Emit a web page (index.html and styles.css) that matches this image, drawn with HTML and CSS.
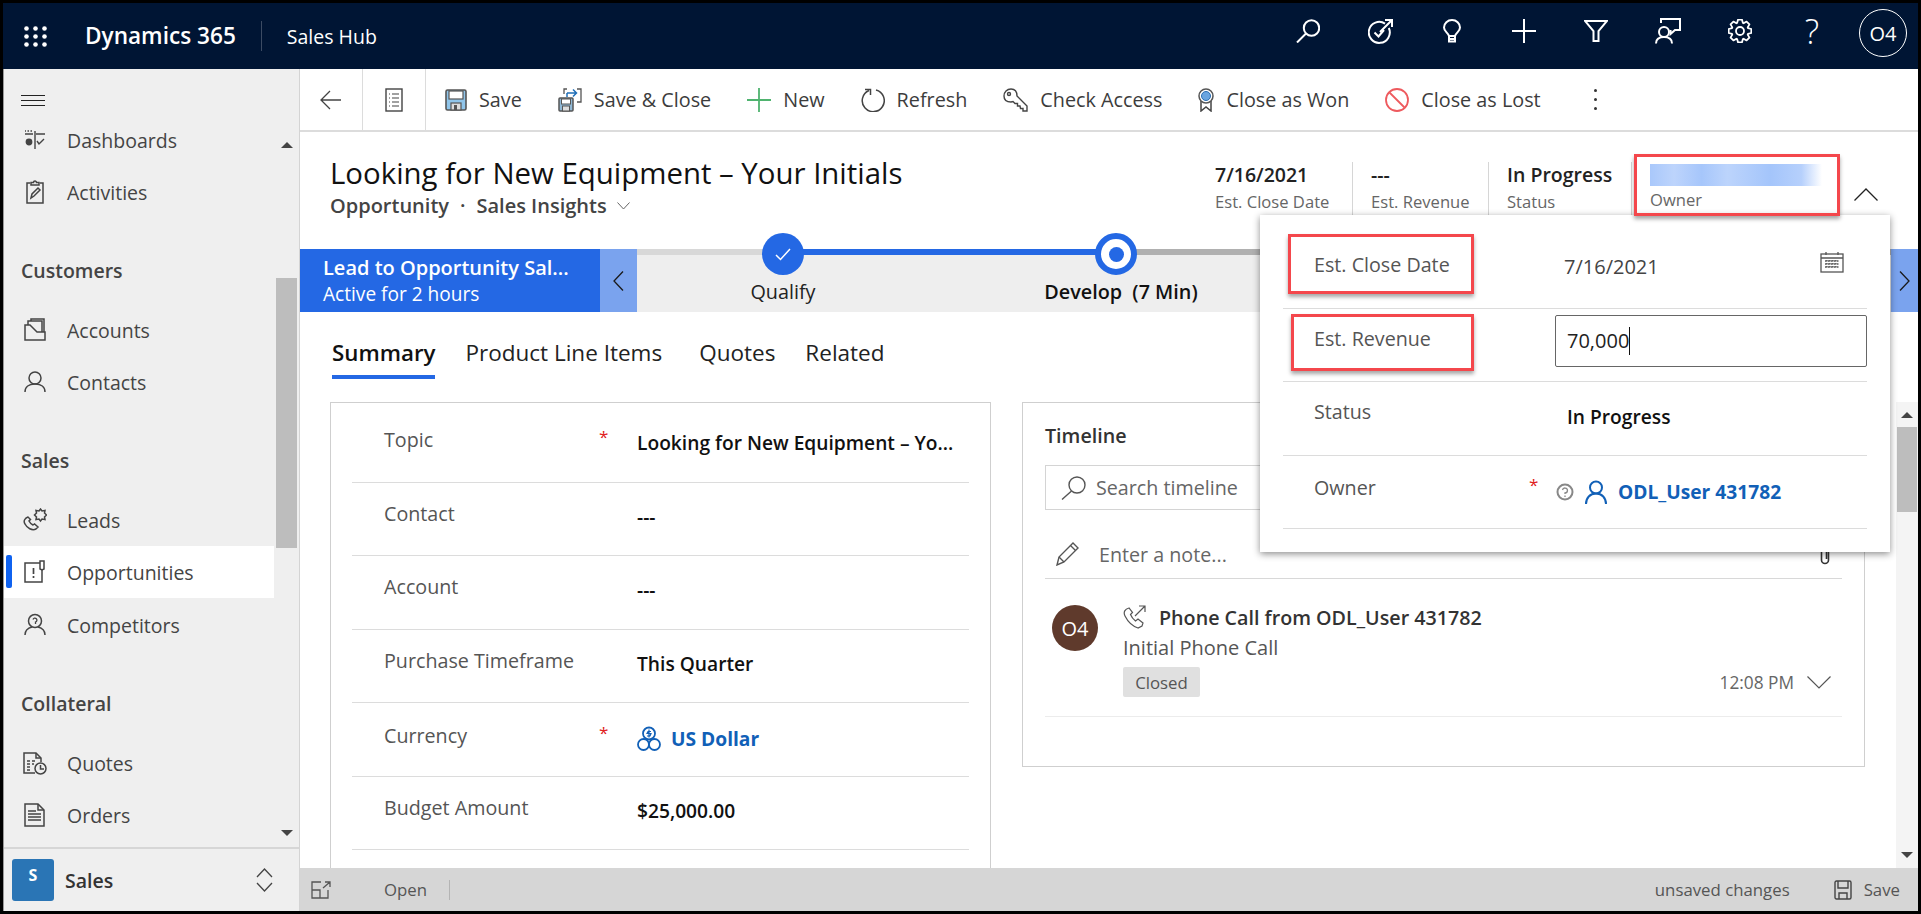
FILE: index.html
```html
<!DOCTYPE html>
<html>
  <head>
    <meta name="viewport" content="width=device-width, initial-scale=1.0" />
    <title>Dynamics 365 - Sales Hub</title>
    <link rel="stylesheet" href="styles.css">
  </head>
  <body>
    <div class="frame">
      <header class="topbar">
        <svg class="waffle" width="23" height="21" viewBox="0 0 23 21" fill="#fff">
          <circle cx="2.5" cy="2.5" r="2.3"/><circle cx="11.5" cy="2.5" r="2.3"/><circle cx="20.5" cy="2.5" r="2.3"/>
          <circle cx="2.5" cy="10.5" r="2.3"/><circle cx="11.5" cy="10.5" r="2.3"/><circle cx="20.5" cy="10.5" r="2.3"/>
          <circle cx="2.5" cy="18.5" r="2.3"/><circle cx="11.5" cy="18.5" r="2.3"/><circle cx="20.5" cy="18.5" r="2.3"/>
        </svg>
        <div class="brand">Dynamics 365</div>
        <div class="app-name">Sales Hub</div>
        <div class="top-icons">
          <div class="top-icon">
            <svg width="24" height="24" viewBox="0 0 24 24" fill="none" stroke="#fff" stroke-width="2"><circle cx="15.5" cy="9" r="7.7"/><path d="M10 14.5L1 23.5"/></svg>
          </div>
          <div class="top-icon">
            <svg width="25" height="25" viewBox="0 0 25 25" fill="none" stroke="#fff" stroke-width="2"><path d="M17 4.6A10.5 10.5 0 1 0 20.8 9"/><path d="M12 13L24 1M17 1H24V8"/><path d="M6.5 13.5L10.5 17.5L16 11"/></svg>
          </div>
          <div class="top-icon">
            <svg width="18" height="24" viewBox="0 0 18 24" fill="none" stroke="#fff" stroke-width="2"><path d="M6 17C5 13.5 1 12.5 1 8.5A8 7.5 0 0 1 17 8.500C17 12.500 13 13.500 12 17Z"/><path d="M6 17V22.500H12V17M6 20H12"/></svg>
          </div>
          <div class="top-icon">
            <svg width="24" height="24" viewBox="0 0 24 24" stroke="#fff" stroke-width="2"><path d="M0 12H24M12 0V24"/></svg>
          </div>
          <div class="top-icon">
            <svg width="24" height="22" viewBox="0 0 24 22" fill="none" stroke="#fff" stroke-width="2"><path d="M1 1H23L14.500 11V21H9.500V11Z"/></svg>
          </div>
          <div class="top-icon">
            <svg width="26" height="26" viewBox="0 0 26 26" fill="none" stroke="#fff" stroke-width="2"><path d="M6 5V1H25V12H20L15.500 16V12"/><circle cx="9" cy="14" r="5"/><path d="M1 25.500C1 21 4 19 9 19C14 19 17 21 17 25.500"/></svg>
          </div>
          <div class="top-icon">
            <svg width="24" height="24" viewBox="-12 -12 24 24" fill="none" stroke="#fff" stroke-width="1.800" stroke-linejoin="round">
              <polygon points="7.99,-2.91 11.33,-2 11.33,2 7.99,2.91 7.71,3.59 9.43,6.6 6.6,9.43 3.59,7.71 2.91,7.99 2,11.33 -2,11.33 -2.91,7.99 -3.59,7.71 -6.6,9.43 -9.43,6.6 -7.71,3.59 -7.99,2.91 -11.33,2 -11.33,-2 -7.99,-2.91 -7.71,-3.59 -9.43,-6.6 -6.6,-9.43 -3.59,-7.71 -2.91,-7.99 -2,-11.33 2,-11.33 2.91,-7.99 3.59,-7.71 6.6,-9.43 9.43,-6.6 7.71,-3.59"/>
              <circle r="4"/>
            </svg>
          </div>
          <div class="top-icon help-glyph">?</div>
          <div class="user-circle">O4</div>
        </div>
      </header>

      <div class="main">
        <aside class="sidebar">
          <div class="burger"><span></span><span></span><span></span></div>
          <div class="nav-wrap">
            <nav class="nav">
              <div class="nav-item">
                <svg width="22" height="22" viewBox="0 0 22 22" fill="none" stroke="#444" stroke-width="1.400"><path d="M1 5H9M12 5H21M11 2V20M1 2H2M3.500 2H5M6.500 2H8"/><circle cx="5" cy="13" r="2.700" fill="#444"/><path d="M13 12L15 15L17 13L20 10"/></svg>
                <span>Dashboards</span>
              </div>
              <div class="nav-item">
                <svg width="22" height="24" viewBox="0 0 22 24" fill="none" stroke="#444" stroke-width="1.500"><path d="M6 3H3V23H19V3H16"/><path d="M7 5V2.500H9.500A1.500 1.500 0 0 1 12.500 2.500H15V5Z"/><path d="M7 18L8 14L14 8L16 10L10 16Z"/></svg>
                <span>Activities</span>
              </div>
              <div class="nav-heading">Customers</div>
              <div class="nav-item">
                <svg width="22" height="24" viewBox="0 0 22 24" fill="none" stroke="#444" stroke-width="1.500"><path d="M1 22V7H6L13 14H21V22Z"/><path d="M4 7V3H18V14M7 3V1H20V14"/></svg>
                <span>Accounts</span>
              </div>
              <div class="nav-item">
                <svg width="22" height="24" viewBox="0 0 22 24" fill="none" stroke="#444" stroke-width="1.500"><circle cx="11" cy="8" r="6"/><path d="M1 22C1 17 5 14 11 14C17 14 21 17 21 22"/></svg>
                <span>Contacts</span>
              </div>
              <div class="nav-heading">Sales</div>
              <div class="nav-item">
                <svg width="24" height="24" viewBox="0 0 24 24" fill="none" stroke="#444" stroke-width="1.500"><path d="M5 9C2 10 0 13 2 16C4 20 9 23 13 21L15 19L11.500 16L10 17C8 16 7 15 6 13L7.500 11.500L5 9Z"/><path d="M16 3L17.500 1L19 3L22 2.500L21.500 5L23.500 7L21.500 9L22 11.500L19 11L17.500 13L16 11L13 11.500L13.500 9L11.500 7L13.500 5L13 2.500Z"/></svg>
                <span>Leads</span>
              </div>
              <div class="nav-item nav-item-active">
                <svg width="22" height="24" viewBox="0 0 22 24" fill="none" stroke="#444" stroke-width="1.500"><path d="M16 3H1V22H18V10"/><path d="M16 1H20V9L18 10L16 9Z"/><path d="M9.500 8V14M9.500 16V18" stroke-width="1.700"/></svg>
                <span>Opportunities</span>
              </div>
              <div class="nav-item">
                <svg width="22" height="24" viewBox="0 0 22 24" fill="none" stroke="#444" stroke-width="1.500"><circle cx="11" cy="8" r="6.500"/><path d="M1 22C1 17 4 15 8 14M21 22C21 17 18 15 14 14"/><path d="M9 6.500A2 2 0 1 1 11.500 9V11" stroke-width="1.300"/></svg>
                <span>Competitors</span>
              </div>
              <div class="nav-heading">Collateral</div>
              <div class="nav-item">
                <svg width="24" height="24" viewBox="0 0 24 24" fill="none" stroke="#444" stroke-width="1.500"><path d="M12 22H1V2H13L18 7V11"/><path d="M13 2V7H18"/><path d="M4 10H7M9 10H12M4 13H7M4 16H7M4 19H7M9 13H11"/><circle cx="17.500" cy="17.500" r="5.500"/><path d="M17.500 14V18H21"/></svg>
                <span>Quotes</span>
              </div>
              <div class="nav-item">
                <svg width="22" height="24" viewBox="0 0 22 24" fill="none" stroke="#444" stroke-width="1.500"><path d="M1 1H14L20 7V23H1Z"/><path d="M14 1V7H20"/><path d="M4 8H12M4 11H17M4 14H17M4 17H17"/></svg>
                <span>Orders</span>
              </div>
            </nav>
            <div class="nav-scroll">
              <div class="arrow-up"></div>
              <div class="nav-thumb"></div>
              <div class="arrow-down"></div>
            </div>
          </div>
          <div class="area-switch">
            <div class="area-badge">S</div>
            <div class="area-name">Sales</div>
            <svg width="17" height="24" viewBox="0 0 17 24" fill="none" stroke="#444" stroke-width="1.300"><path d="M1 9L8.500 1L16 9M1 15L8.500 23L16 15"/></svg>
          </div>
        </aside>

        <section class="content">
          <div class="toolbar">
            <div class="tool-square">
              <svg width="22" height="20" viewBox="0 0 22 20" fill="none" stroke="#444" stroke-width="1.300"><path d="M21 10H1M10 1L1 10L10 19"/></svg>
            </div>
            <div class="tool-square">
              <svg width="18" height="24" viewBox="0 0 18 24" fill="none" stroke="#444" stroke-width="1.400"><rect x="1" y="1" width="16" height="22"/><path d="M4 6H5M7 6H14M4 10H5M7 10H14M4 14H5M7 14H14M4 18H5M7 18H14" stroke-width="1.200"/></svg>
            </div>
            <div class="commands">
              <div class="command">
                <svg width="22" height="22" viewBox="0 0 22 22"><rect x="1" y="1" width="20" height="20" rx="1.500" fill="#90c5ea" stroke="#555" stroke-width="1.600"/><rect x="4" y="2" width="14" height="8" fill="#fff" stroke="#555" stroke-width="1.200"/><rect x="6" y="14" width="10" height="7" fill="#ddd" stroke="#555" stroke-width="1.200"/><rect x="9" y="16" width="3" height="5" fill="#555"/></svg>
                <span>Save</span>
              </div>
              <div class="command">
                <svg width="24" height="24" viewBox="0 0 24 24" fill="none"><rect x="1" y="10" width="14" height="13" rx="1" fill="#90b8d5" stroke="#555" stroke-width="1.500"/><rect x="3.500" y="11" width="9" height="5" fill="#fff" stroke="#555"/><rect x="4.500" y="18" width="7" height="5" fill="#ddd" stroke="#555"/><path d="M6 6V1H9M19 1H23V14H19" stroke="#555" stroke-width="1.300"/><path d="M9 5H18M15 1.500L18.500 5L15 8.500M9 5V9" stroke="#1f6fb8" stroke-width="1.500"/></svg>
                <span>Save &amp; Close</span>
              </div>
              <div class="command">
                <svg width="24" height="24" viewBox="0 0 24 24" stroke="#4fb36f" stroke-width="1.800"><path d="M0 12H24M12 0V24"/></svg>
                <span>New</span>
              </div>
              <div class="command">
                <svg width="24" height="24" viewBox="0 0 24 24" fill="none" stroke="#444" stroke-width="1.500"><path d="M8 2.500A11 11 0 1 0 15 2"/><path d="M9.500 7V1.500H4"/></svg>
                <span>Refresh</span>
              </div>
              <div class="command">
                <svg width="25" height="24" viewBox="0 0 25 24" fill="none" stroke="#444" stroke-width="1.400"><path d="M8 1C4 1 1 4 1 8C1 12 4 14 8 14L10 13.500L12 15.500H14.500V18H17L17.500 20.500H20V23H24V18L14 8C14 4 12 1 8 1Z"/><circle cx="6" cy="6" r="1.500"/></svg>
                <span>Check Access</span>
              </div>
              <div class="command">
                <svg width="16" height="24" viewBox="0 0 16 24"><path d="M3 13V23L8 19L13 23V13" fill="none" stroke="#444" stroke-width="1.500"/><circle cx="8" cy="8" r="7" fill="#fff" stroke="#555" stroke-width="1.500"/><circle cx="8" cy="8" r="4.500" fill="#6aa5e0" stroke="#2c6fb3"/></svg>
                <span>Close as Won</span>
              </div>
              <div class="command">
                <svg width="24" height="24" viewBox="0 0 24 24" fill="none" stroke="#ee5a5e" stroke-width="1.800"><circle cx="12" cy="12" r="11"/><path d="M4.500 4.500L19.500 19.500"/></svg>
                <span>Close as Lost</span>
              </div>
              <div class="kebab"><i></i><i></i><i></i></div>
            </div>
          </div>

          <div class="record-head">
            <div class="record-title">
              <h1>Looking for New Equipment – Your Initials</h1>
              <div class="record-sub">
                <span>Opportunity</span>
                <span class="sub-dot">·</span>
                <span>Sales Insights</span>
                <svg width="13" height="8" viewBox="0 0 13 8" fill="none" stroke="#666"><path d="M.500 .500L6.500 7L12.500 .500"/></svg>
              </div>
            </div>
            <div class="stats">
              <div class="stat stat-first">
                <div class="stat-value">7/16/2021</div>
                <div class="stat-label">Est. Close Date</div>
              </div>
              <div class="stat">
                <div class="stat-value">---</div>
                <div class="stat-label">Est. Revenue</div>
              </div>
              <div class="stat">
                <div class="stat-value">In Progress</div>
                <div class="stat-label">Status</div>
              </div>
              <div class="stat">
                <div class="stat-value stat-blur">ODL_User 431782</div>
                <div class="stat-label">Owner</div>
              </div>
              <div class="stat-toggle">
                <svg width="24" height="13" viewBox="0 0 24 13" fill="none" stroke="#222" stroke-width="1.300"><path d="M.500 12.500L12 1L23.500 12.500"/></svg>
              </div>
            </div>
          </div>

          <div class="bpf">
            <div class="bpf-lead">
              <div class="bpf-lead-name">Lead to Opportunity Sal...</div>
              <div class="bpf-lead-time">Active for 2 hours</div>
            </div>
            <div class="bpf-nav">
              <svg width="11" height="20" viewBox="0 0 11 20" fill="none" stroke="#1a1a1a" stroke-width="1.300"><path d="M10 .500L1 10L10 19.500"/></svg>
            </div>
            <div class="stages">
              <div class="stage">
                <div class="stage-dot stage-done">
                  <svg width="16" height="13" viewBox="0 0 16 13" fill="none" stroke="#fff" stroke-width="1.500"><path d="M1 7L5.500 11.500L15 1"/></svg>
                </div>
                <div class="stage-name">Qualify</div>
              </div>
              <div class="stage">
                <div class="stage-dot stage-now"><i></i></div>
                <div class="stage-name stage-name-now">Develop&nbsp; (7 Min)</div>
              </div>
            </div>
            <div class="bpf-nav bpf-nav-end">
              <svg width="11" height="20" viewBox="0 0 11 20" fill="none" stroke="#1a1a1a" stroke-width="1.300"><path d="M1 .500L10 10L1 19.500"/></svg>
            </div>
          </div>

          <div class="tabs">
            <div class="tab tab-active">Summary</div>
            <div class="tab tab-wide">Product Line Items</div>
            <div class="tab">Quotes</div>
            <div class="tab">Related</div>
          </div>

          <div class="cards">
            <div class="card card-form">
              <div class="field">
                <div class="field-label">Topic</div>
                <div class="field-star">*</div>
                <div class="field-value">Looking for New Equipment – Yo...</div>
              </div>
              <div class="field">
                <div class="field-label">Contact</div>
                <div class="field-star"></div>
                <div class="field-value">---</div>
              </div>
              <div class="field">
                <div class="field-label">Account</div>
                <div class="field-star"></div>
                <div class="field-value">---</div>
              </div>
              <div class="field">
                <div class="field-label">Purchase Timeframe</div>
                <div class="field-star"></div>
                <div class="field-value">This Quarter</div>
              </div>
              <div class="field field-low">
                <div class="field-label">Currency</div>
                <div class="field-star">*</div>
                <div class="field-value field-link">
                  <svg width="24" height="26" viewBox="0 0 24 26" fill="none" stroke="#1160b7" stroke-width="1.800"><circle cx="12" cy="7.500" r="6"/><circle cx="6.500" cy="18.500" r="5.500"/><circle cx="17.500" cy="18.500" r="5.500"/><path d="M14 5.500H11L10 7.500H14L13 10H10M12 3.500V11.500" stroke-width="1.200"/></svg>
                  <span>US Dollar</span>
                </div>
              </div>
              <div class="field">
                <div class="field-label">Budget Amount</div>
                <div class="field-star"></div>
                <div class="field-value">$25,000.00</div>
              </div>
            </div>

            <div class="card card-timeline">
              <div class="timeline-title">Timeline</div>
              <div class="timeline-search">
                <svg width="25" height="24" viewBox="0 0 25 24" fill="none" stroke="#555" stroke-width="1.400"><circle cx="16" cy="9" r="8"/><path d="M10.500 15L1 23.500"/></svg>
                <span>Search timeline</span>
              </div>
              <div class="timeline-note">
                <svg width="25" height="24" viewBox="0 0 25 24" fill="none" stroke="#555" stroke-width="1.400"><path d="M1 23L3 15L17 1L22 6L8 20Z"/><path d="M3 15L8 20M14.500 3.500L19.500 8.500"/></svg>
                <span class="note-text">Enter a note...</span>
                <svg class="note-clip" width="12" height="24" viewBox="0 0 12 24" fill="none" stroke="#333" stroke-width="1.600"><path d="M9.500 5V18A3.500 3.500 0 0 1 2.500 18V4A2.500 2.500 0 0 1 7.500 4V17"/></svg>
              </div>
              <div class="timeline-item">
                <div class="avatar">O4</div>
                <div class="item-body">
                  <div class="item-title">
                    <svg width="24" height="24" viewBox="0 0 24 24" fill="none" stroke="#555" stroke-width="1.200"><path d="M6 3C2 4 0 7 2 11C5 17 9 21 15 23L19 21L20 18L15 14L12.500 16C10 14 8.500 12 7.500 9.500L9.500 7.500Z"/><path d="M12 11L22 1M16 1H22V7"/></svg>
                    <span>Phone Call from ODL_User 431782</span>
                  </div>
                  <div class="item-sub">Initial Phone Call</div>
                  <div class="item-meta">
                    <div class="chip">Closed</div>
                    <div class="item-time">
                      <span>12:08 PM</span>
                      <svg width="24" height="13" viewBox="0 0 24 13" fill="none" stroke="#555" stroke-width="1.200"><path d="M.500 .500L12 12L23.500 .500"/></svg>
                    </div>
                  </div>
                </div>
              </div>
            </div>

            <div class="page-scroll">
              <div class="arrow-up"></div>
              <div class="page-thumb"></div>
              <div class="arrow-down"></div>
            </div>
          </div>

          <footer class="statusbar">
            <svg width="20" height="18" viewBox="0 0 20 18" fill="none" stroke="#555" stroke-width="1.300"><path d="M10 1H1V17H17V9M1 9H9V17M12 7L19 1M14 1H19V6"/></svg>
            <div class="status-open">Open</div>
            <div class="status-line"></div>
            <div class="status-unsaved">unsaved changes</div>
            <div class="status-save">
              <svg width="18" height="20" viewBox="0 0 18 20" fill="none" stroke="#444" stroke-width="1.400"><rect x="1" y="1" width="16" height="18" rx="1.500"/><path d="M4 1V8H14V1M5 19V13H13V19"/></svg>
              <span>Save</span>
            </div>
          </footer>
        </section>
      </div>

      <div class="quick-form">
        <div class="field">
          <div class="field-label">Est. Close Date</div>
          <div class="field-star"></div>
          <div class="date-value">
            <span>7/16/2021</span>
            <svg width="24" height="22" viewBox="0 0 24 22" fill="none" stroke="#555" stroke-width="1.300"><rect x="1" y="3" width="22" height="18"/><path d="M1 7H23M6 1V4M18 1V4"/><path d="M5 10H19M5 13H19M5 16H19M7 9V18M10 9V18M13 9V18M16 9V18" stroke-dasharray="1.500 1.500"/></svg>
          </div>
        </div>
        <div class="field">
          <div class="field-label">Est. Revenue</div>
          <div class="field-star"></div>
          <div class="input-box"><span>70,000</span><i class="caret"></i></div>
        </div>
        <div class="field">
          <div class="field-label">Status</div>
          <div class="field-star"></div>
          <div class="field-value">In Progress</div>
        </div>
        <div class="field field-low">
          <div class="field-label">Owner</div>
          <div class="field-star">*</div>
          <div class="field-value field-link owner-link">
            <svg width="18" height="18" viewBox="0 0 18 18" fill="none" stroke="#888" stroke-width="2"><circle cx="9" cy="9" r="7.500"/><path d="M6.500 7A2.500 2.500 0 1 1 9 10V11M9 12.500V14" stroke-width="1.300"/></svg>
            <svg width="22" height="24" viewBox="0 0 22 24" fill="none" stroke="#1160b7" stroke-width="2"><circle cx="11" cy="7.500" r="6"/><path d="M1 24C1 18 5 13.500 11 13.500C17 13.500 21 18 21 24"/></svg>
            <span>ODL_User 431782</span>
          </div>
        </div>
      </div>

      <div class="callout callout-owner"></div>
      <div class="callout callout-date"></div>
      <div class="callout callout-revenue"></div>
    </div>
  </body>
</html>
```

FILE: styles.css
```css
* {
  box-sizing: border-box;
}

body {
  margin: 0;
  font-family: "Open Sans", "Noto Sans", sans-serif;
  color: #333;
  background-color: #fff;
}

.frame {
  position: relative;
  width: 1921px;
  height: 914px;
  border: 3px solid #000;
  display: flex;
  flex-direction: column;
  overflow: hidden;
}

/* top navy bar */
.topbar {
  height: 66px;
  flex: none;
  background-color: #001534;
  color: #fff;
  display: flex;
  align-items: center;
  padding-left: 21px;
}

.waffle {
  margin-right: 38px;
}

.brand {
  font-size: 22.600px;
  font-weight: 600;
  padding-right: 25px;
  border-right: 1px solid #3c4b63;
  line-height: 30px;
}

.app-name {
  font-size: 19.500px;
  padding-left: 25px;
}

.top-icons {
  margin-left: auto;
  display: flex;
  align-items: center;
  padding-right: 11px;
}

.top-icon {
  width: 72px;
  height: 66px;
  display: flex;
  justify-content: center;
  align-items: center;
  padding-bottom: 10px;
}

.help-glyph {
  font-size: 34px;
  font-weight: 300;
  padding-bottom: 10px;
}

.user-circle {
  width: 48px;
  height: 48px;
  margin-left: 11px;
  border: 1.500px solid #fff;
  border-radius: 50%;
  display: flex;
  justify-content: center;
  align-items: center;
  font-size: 20px;
  margin-top: -6px;
}

.main {
  flex: 1;
  display: flex;
  min-height: 0;
}

/* left navigation */
.sidebar {
  width: 297px;
  flex: none;
  background-color: #efefef;
  border-left: 1px solid #999;
  border-right: 1px solid #d4d4d4;
  display: flex;
  flex-direction: column;
}

.burger {
  height: 45px;
  flex: none;
  padding: 26px 0 0 17px;
}

.burger span {
  display: block;
  width: 24px;
  height: 1px;
  background-color: #222;
  margin-bottom: 4px;
}

.nav-wrap {
  flex: 1;
  min-height: 0;
  display: grid;
  grid-template-columns: 270px 21px;
  column-gap: 2px;
}

.nav {
  overflow: hidden;
}

.nav-item {
  height: 52px;
  display: flex;
  align-items: center;
  padding-left: 19px;
  font-size: 19.500px;
  color: #444;
  position: relative;
}

.nav-item svg {
  width: 24px;
  flex: none;
  margin-right: 20px;
}

.nav-item-active {
  background-color: #fff;
  margin-bottom: 1px;
}

.nav-item-active::before {
  content: "";
  position: absolute;
  left: 2px;
  top: 9px;
  width: 6px;
  height: 33px;
  border-radius: 2px;
  background-color: #0f62f0;
}

.nav-heading {
  height: 86px;
  padding: 33px 0 0 17px;
  font-size: 19.500px;
  font-weight: 600;
  line-height: 40px;
  color: #444;
}

.nav-scroll {
  display: flex;
  flex-direction: column;
  align-items: center;
}

.arrow-up {
  width: 0;
  height: 0;
  flex: none;
  border-left: 6px solid transparent;
  border-right: 6px solid transparent;
  border-bottom: 6px solid #444;
}

.arrow-down {
  width: 0;
  height: 0;
  flex: none;
  border-left: 6px solid transparent;
  border-right: 6px solid transparent;
  border-top: 6px solid #444;
}

.nav-scroll .arrow-up {
  margin-top: 28px;
}

.nav-thumb {
  width: 21px;
  height: 270px;
  margin-top: 130px;
  background-color: #bdbdbd;
}

.nav-scroll .arrow-down {
  margin-top: auto;
  margin-bottom: 11px;
}

.area-switch {
  height: 64px;
  flex: none;
  border-top: 2px solid #d6d6d6;
  display: flex;
  align-items: center;
  padding: 0 26px 0 8px;
}

.area-badge {
  width: 42px;
  height: 42px;
  border-radius: 3px;
  background-color: #2a75b5;
  color: #fff;
  font-size: 16px;
  font-weight: 700;
  display: flex;
  justify-content: center;
  padding-top: 5px;
}

.area-name {
  flex: 1;
  margin-left: 11px;
  font-size: 19.500px;
  font-weight: 600;
}

/* record area */
.content {
  flex: 1;
  min-width: 0;
  display: flex;
  flex-direction: column;
}

.toolbar {
  height: 63px;
  flex: none;
  display: flex;
  border-bottom: 2px solid #dcdcdc;
}

.tool-square {
  width: 63px;
  display: flex;
  justify-content: center;
  align-items: center;
  border-right: 1px solid #dcdcdc;
}

.commands {
  display: flex;
  align-items: center;
  gap: 36px;
  padding-left: 19px;
}

.command {
  display: flex;
  align-items: center;
  gap: 12px;
  font-size: 19.800px;
  color: #3c3c3c;
}

.kebab {
  margin-left: 17px;
  display: flex;
  flex-direction: column;
  gap: 6px;
}

.kebab i {
  width: 3px;
  height: 3px;
  border-radius: 50%;
  background-color: #333;
}

.record-head {
  height: 117px;
  flex: none;
  display: flex;
  justify-content: space-between;
}

.record-title {
  padding: 22px 0 0 30px;
}

.record-title h1 {
  margin: 0;
  font-size: 29.400px;
  font-weight: 500;
  line-height: 38px;
  color: #111;
}

.record-sub {
  display: flex;
  align-items: center;
  font-size: 20px;
  font-weight: 600;
  line-height: 28px;
  color: #444;
}

.sub-dot {
  padding: 0 11px;
}

.record-sub svg {
  margin-left: 10px;
}

.stats {
  display: grid;
  grid-template-columns: 136px 136px 143px 220px 67px;
  padding-top: 30px;
  align-items: start;
}

.stat {
  height: 53px;
  border-left: 1px solid #d6d6d6;
  padding-left: 18px;
}

.stat-first {
  border-left: none;
  padding-left: 0;
  margin-left: -1px;
}

.stat-value {
  font-size: 19.500px;
  font-weight: 600;
  line-height: 26px;
  color: #222;
}

.stat-label {
  margin-top: 3px;
  font-size: 16.600px;
  line-height: 22px;
  color: #666;
}

.stat-blur {
  width: 172px;
  height: 22px;
  margin-top: 2px;
  margin-bottom: 2px;
  font-size: 19px;
  line-height: 22px;
  white-space: nowrap;
  color: transparent;
  background: linear-gradient(90deg, #a9c8fb 0, #bdd4fc 14%, #a6c6fb 30%, #bcd4fc 45%, #a4c5fb 70%, #b6d0fc 88%, #fff 100%);
}

.stat-toggle {
  padding: 22px 0 0 3px;
}

/* business process bar */
.bpf {
  height: 63px;
  flex: none;
  display: flex;
}

.bpf-lead {
  width: 300px;
  flex: none;
  background-color: #2468e4;
  color: #fff;
  padding: 5px 0 0 23px;
}

.bpf-lead-name {
  font-size: 20px;
  font-weight: 600;
  line-height: 27px;
}

.bpf-lead-time {
  font-size: 19.100px;
  line-height: 27px;
}

.bpf-nav {
  width: 37px;
  flex: none;
  background-color: #7aa3ee;
  display: flex;
  justify-content: center;
  align-items: center;
}

.bpf-nav-end {
  width: 27px;
}

.stages {
  flex: 1;
  display: flex;
  gap: 133px;
  padding-left: 46px;
  background:
    linear-gradient(90deg, #d8d8d8 0, #d8d8d8 146px, #2468e4 146px, #2468e4 480px, #b0b0b0 480px) top / 100% 6px no-repeat,
    #eeeeee;
}

.stage {
  width: 200px;
  margin-top: -16px;
  display: flex;
  flex-direction: column;
  align-items: center;
}

.stage-dot {
  width: 42px;
  height: 42px;
  border-radius: 50%;
  background-color: #2468e4;
  display: flex;
  justify-content: center;
  align-items: center;
}

.stage-now {
  background-color: #fff;
  border: 6px solid #2468e4;
}

.stage-now i {
  width: 15px;
  height: 15px;
  border-radius: 50%;
  background-color: #2468e4;
}

.stage-name {
  margin-top: 3px;
  font-size: 19.800px;
  line-height: 28px;
  color: #222;
  white-space: nowrap;
}

.stage-name-now {
  font-weight: 600;
  color: #111;
  padding-left: 10px;
}

.tabs {
  height: 90px;
  flex: none;
  display: flex;
  gap: 30px;
  padding: 27px 0 0 32px;
}

.tab {
  height: 40px;
  font-size: 22.500px;
  line-height: 28px;
  color: #222;
}

.tab-active {
  font-size: 22.300px;
  font-weight: 600;
  color: #111;
  border-bottom: 4px solid #2468e4;
}

.tab-wide {
  margin-right: 7px;
}

.cards {
  flex: 1;
  min-height: 0;
  display: flex;
  overflow: hidden;
  padding-left: 30px;
  background-color: #fff;
}

.card {
  flex: none;
  border: 1.500px solid #cfcfcf;
}

.card-form {
  width: 661px;
  height: 520px;
  padding: 6px 21px 0;
}

.card-form .field {
  grid-template-columns: 252px 33px 1fr;
}

.card-form .field-label {
  padding-left: 32px;
}

.field {
  display: grid;
  grid-template-columns: 251px 33px 1fr;
  height: 73.500px;
  border-bottom: 1px solid #dcdcdc;
  padding-top: 18px;
}

.field-low {
  padding-top: 20px;
}

.field-label {
  padding-left: 31px;
  font-size: 19.700px;
  line-height: 26px;
  color: #555;
}

.field-star {
  margin-left: -5px;
  color: #e02020;
  font-size: 17px;
  line-height: 20px;
}

.field-value {
  padding-top: 3px;
  font-size: 19.200px;
  font-weight: 600;
  line-height: 26px;
  color: #111;
  white-space: nowrap;
}

.field-link {
  display: flex;
  align-items: center;
  gap: 10px;
  color: #1160b7;
  font-weight: 700;
  height: 29px;
}

.card-timeline {
  width: 843px;
  height: 365px;
  margin-left: 31px;
  padding: 20px 22px 0;
}

.timeline-title {
  font-size: 19.700px;
  font-weight: 600;
  line-height: 26px;
  color: #333;
}

.timeline-search {
  width: 400px;
  height: 45px;
  margin-top: 16px;
  border: 1px solid #d4d4d4;
  display: flex;
  align-items: center;
  gap: 10px;
  padding-left: 15px;
  font-size: 19.700px;
  color: #666;
}

.timeline-note {
  height: 69px;
  display: flex;
  align-items: center;
  padding: 20px 0 0 11px;
  border-bottom: 1px solid #d8d8d8;
  font-size: 19.700px;
  color: #666;
}

.note-text {
  margin-left: 18px;
}

.note-clip {
  margin-left: auto;
  margin-right: 11px;
}

.timeline-item {
  height: 138px;
  display: flex;
  border-bottom: 1px solid #ececec;
}

.avatar {
  width: 46px;
  height: 46px;
  flex: none;
  margin: 26px 25px 0 7px;
  border-radius: 50%;
  background-color: #5f3a2c;
  color: #fff;
  font-size: 20px;
  display: flex;
  justify-content: center;
  align-items: center;
}

.item-body {
  flex: 1;
  padding-top: 25px;
  padding-right: 11px;
}

.item-title {
  display: flex;
  align-items: center;
  gap: 12px;
  height: 26px;
  font-size: 19.700px;
  font-weight: 600;
  color: #333;
}

.item-sub {
  margin-top: 5px;
  font-size: 20px;
  line-height: 26px;
  color: #555;
}

.item-meta {
  display: flex;
  justify-content: space-between;
  align-items: center;
  margin-top: 6px;
}

.chip {
  width: 77px;
  height: 30px;
  border-radius: 2px;
  background-color: #e0e0e0;
  font-size: 16.800px;
  display: flex;
  justify-content: center;
  align-items: center;
  color: #555;
}

.item-time {
  display: flex;
  align-items: center;
  gap: 13px;
  font-size: 17.300px;
  color: #666;
}

.page-scroll {
  width: 22px;
  margin-left: auto;
  background-color: #f4f4f4;
  display: flex;
  flex-direction: column;
  align-items: center;
}

.page-scroll .arrow-up {
  margin-top: 10px;
}

.page-thumb {
  width: 20px;
  height: 85px;
  margin-top: 9px;
  background-color: #bdbdbd;
}

.page-scroll .arrow-down {
  margin-top: auto;
  margin-bottom: 10px;
}

.statusbar {
  height: 43px;
  flex: none;
  background-color: #d6d6d6;
  display: flex;
  align-items: center;
  padding: 0 18px 0 11px;
  font-size: 16.800px;
  color: #555;
}

.status-open {
  margin-left: 53px;
}

.status-line {
  width: 1px;
  height: 20px;
  margin-left: 22px;
  background-color: #b4b4b4;
}

.status-unsaved {
  margin-left: auto;
}

.status-save {
  display: flex;
  align-items: center;
  gap: 12px;
  margin-left: 44px;
}

/* quick form flyout over the page */
.quick-form {
  position: absolute;
  left: 1257px;
  top: 212px;
  width: 630px;
  height: 337px;
  padding: 20px 23px 0;
  background-color: #fff;
  box-shadow: 0 2px 7px rgba(0, 0, 0, 0.45);
}

.quick-form .field {
  padding-top: 17px;
}

.quick-form .field-value {
  padding-top: 5px;
}

.quick-form .field-low {
  padding-top: 19px;
}

.date-value {
  display: flex;
  justify-content: space-between;
  align-items: flex-start;
  padding: 2px 23px 0 0;
  margin-left: -3px;
  font-size: 20px;
  line-height: 26px;
  color: #444;
}

.date-value svg {
  margin-top: -3px;
}

.input-box {
  height: 52px;
  margin: -11px 0 0 -12px;
  border: 1px solid #666;
  border-radius: 2px;
  display: flex;
  align-items: center;
  padding-left: 11px;
  font-size: 20px;
  color: #222;
}

.caret {
  width: 1px;
  height: 28px;
  background-color: #111;
}

.owner-link {
  margin-left: -11px;
  gap: 11px;
}

/* red annotation boxes */
.callout {
  position: absolute;
  border: 3px solid #f4474c;
  box-shadow: 0 3px 4px rgba(0, 0, 0, 0.35);
}

.callout-owner {
  left: 1631px;
  top: 151px;
  width: 206px;
  height: 62px;
}

.callout-date {
  left: 1285px;
  top: 231px;
  width: 186px;
  height: 60px;
}

.callout-revenue {
  left: 1288px;
  top: 311px;
  width: 183px;
  height: 57px;
}
```
